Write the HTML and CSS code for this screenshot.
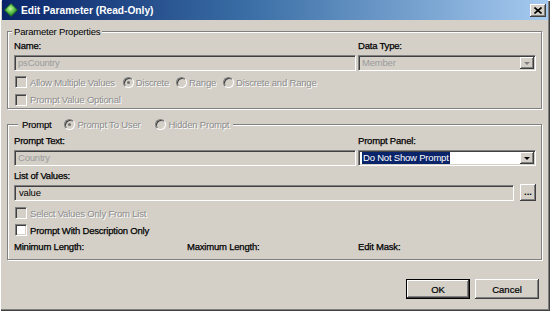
FILE: index.html
```html
<!DOCTYPE html>
<html>
<head>
<meta charset="utf-8">
<link rel="stylesheet" href="styles.css">
</head>
<body>
<div class="window">
  <div class="titlebar">
    <svg class="app-icon" viewBox="0 0 14 14" width="14" height="14">
      <defs>
        <radialGradient id="dg" cx="0.45" cy="0.4" r="0.6">
          <stop offset="0" stop-color="#c8f5a0"/>
          <stop offset="0.5" stop-color="#5cc04a"/>
          <stop offset="1" stop-color="#1d7a22"/>
        </radialGradient>
      </defs>
      <polygon points="7,0.5 13.5,7 7,13.5 0.5,7" fill="url(#dg)" stroke="#17631b" stroke-width="0.8"/>
    </svg>
    <span class="title">Edit Parameter (Read-Only)</span>
    <span class="close">
      <svg viewBox="0 0 8 7" width="8" height="7"><path d="M0.5 0.5 L7.5 6.5 M7.5 0.5 L0.5 6.5" stroke="#000" stroke-width="1.6"/></svg>
    </span>
  </div>

  <div class="client">
    <fieldset class="group g1">
      <legend class="legend1">Parameter Properties</legend>
      <div class="two-col">
        <div class="field">
          <span class="lbl">Name:</span>
          <div class="input disabled">psCountry</div>
        </div>
        <div class="field">
          <span class="lbl">Data Type:</span>
          <div class="select disabled"><span class="sel-text">Member</span><span class="drop"><span class="arrow gray"></span></span></div>
        </div>
      </div>
      <div class="opts row-a">
        <span class="chk dis"><span class="box"></span><span class="txt">Allow Multiple Values</span></span>
        <span class="rad dis"><span class="dot on"></span><span class="txt">Discrete</span></span>
        <span class="rad dis"><span class="dot"></span><span class="txt">Range</span></span>
        <span class="rad dis"><span class="dot"></span><span class="txt">Discrete and Range</span></span>
      </div>
      <div class="opts row-b">
        <span class="chk dis"><span class="box"></span><span class="txt">Prompt Value Optional</span></span>
      </div>
    </fieldset>

    <fieldset class="group g2">
      <legend class="legend2">
        <span class="legend-inner">
          <span class="legend-text">Prompt</span>
          <span class="rad dis r1"><span class="dot on"></span><span class="txt">Prompt To User</span></span>
          <span class="rad dis r2"><span class="dot"></span><span class="txt">Hidden Prompt</span></span>
        </span>
      </legend>
      <div class="two-col first">
        <div class="field">
          <span class="lbl">Prompt Text:</span>
          <div class="input disabled">Country</div>
        </div>
        <div class="field">
          <span class="lbl">Prompt Panel:</span>
          <div class="select white"><span class="sel-text"><span class="hl">Do Not Show Prompt</span></span><span class="drop"><span class="arrow"></span></span></div>
        </div>
      </div>
      <span class="lbl lov">List of Values:</span>
      <div class="lov-row">
        <div class="input ro">value</div>
        <span class="ellipsis">...</span>
      </div>
      <div class="opts row-c">
        <span class="chk dis"><span class="box"></span><span class="txt">Select Values Only From List</span></span>
      </div>
      <div class="opts row-d">
        <span class="chk"><span class="box white"></span><span class="txt">Prompt With Description Only</span></span>
      </div>
      <div class="len-row">
        <span class="lbl">Minimum Length:</span>
        <span class="lbl">Maximum Length:</span>
        <span class="lbl">Edit Mask:</span>
      </div>
    </fieldset>

    <div class="buttons">
      <button class="btn default">OK</button>
      <button class="btn">Cancel</button>
    </div>
  </div>
</div>
</body>
</html>
```

FILE: styles.css
```css
* { box-sizing: border-box; }

html, body {
  margin: 0;
  padding: 0;
  background: #d4d0c8;
}

body {
  font-family: "Liberation Sans", Arial, sans-serif;
  font-size: 9.5px;
  letter-spacing: -0.2px;
  color: #000;
}

.window {
  width: 550px;
  height: 311px;
  display: flex;
  flex-direction: column;
  background: #d4d0c8;
  box-shadow: inset 1px 1px 0 #fff, inset -1px -1px 0 #404040, inset -2px -2px 0 #808080;
}

/* title bar */
.titlebar {
  height: 20px;
  margin: 0 2px;
  padding: 0 2px 0 2px;
  display: flex;
  align-items: center;
  background: linear-gradient(to right, #0a246a 0%, #3a6ea5 45%, #a6caf0 100%);
}

.app-icon {
  flex: none;
  width: 14px;
  height: 14px;
  margin-right: 3px;
}

.title {
  flex: 1;
  color: #fff;
  font-weight: bold;
  font-size: 10.2px;
  letter-spacing: 0;
  padding-top: 1px;
}

.close {
  flex: none;
  width: 16px;
  height: 13px;
  display: flex;
  align-items: center;
  justify-content: center;
  background: #d4d0c8;
  box-shadow: inset -1px -1px 0 #404040, inset 1px 1px 0 #fff, inset -2px -2px 0 #808080;
}

/* client area */
.client {
  flex: 1;
  display: flex;
  flex-direction: column;
  padding: 5px 8px 0 7px;
}

.group {
  margin: 0;
  padding: 0 5px 0 6px;
  border: 1px solid #808080;
  box-shadow: 1px 1px 0 #fff, inset 1px 1px 0 #fff;
  min-width: 0;
}

.group legend {
  height: 13px;
  line-height: 13px;
  background: #d4d0c8;
}

.legend1 {
  padding: 0 2px;
  margin-left: -2px;
}

.g2 {
  margin-top: 9px;
  padding-bottom: 6px;
}

.legend2 {
  padding: 0 4px;
  margin-left: 4px;
}

.legend-inner {
  display: flex;
  align-items: center;
  height: 13px;
}

.legend-inner .r1 { margin-left: 13px; }
.legend-inner .r2 { margin-left: 15px; }

.two-col {
  display: grid;
  grid-template-columns: 1fr 178px;
  column-gap: 2px;
  margin-top: 2px;
}

.two-col.first { margin-top: 4px; }

.field {
  display: flex;
  flex-direction: column;
}

.lbl {
  display: block;
  height: 12px;
  line-height: 12px;
  margin-bottom: 3px;
  white-space: nowrap;
  -webkit-text-stroke: 0.25px #000;
}

/* sunken edit fields */
.input, .select {
  height: 16px;
  border: 1px solid;
  border-color: #808080 #fff #fff #808080;
  box-shadow: inset 1px 1px 0 #404040, inset -1px -1px 0 #d4d0c8;
  background: #d4d0c8;
  line-height: 14px;
  white-space: nowrap;
  overflow: hidden;
}

.input {
  padding: 0 3px;
}

.input.disabled, .select.disabled .sel-text {
  color: #9a9a9a;
}

.select {
  display: flex;
  padding: 1px;
}

.select.white {
  background: #fff;
}

.sel-text {
  flex: 1;
  padding-left: 2px;
  line-height: 12px;
}

.hl {
  display: inline-block;
  background: #0a246a;
  color: #fff;
  line-height: 12px;
  padding: 0 1px;
}

.drop {
  flex: none;
  width: 14px;
  height: 12px;
  display: flex;
  align-items: center;
  justify-content: center;
  background: #d4d0c8;
  box-shadow: inset -1px -1px 0 #404040, inset 1px 1px 0 #fff, inset -2px -2px 0 #808080;
}

.arrow {
  width: 0;
  height: 0;
  border-left: 3px solid transparent;
  border-right: 3px solid transparent;
  border-top: 3px solid #000;
  margin-top: 1px;
}

.arrow.gray {
  border-top-color: #808080;
}

/* check / radio rows */
.opts {
  display: flex;
  align-items: center;
  height: 16px;
  padding-left: 1px;
}

.row-a { margin-top: 3px; gap: 7px; }
.row-b { margin-top: 1px; height: 17px; }
.row-c { margin-top: 4px; }
.row-d { margin-top: 1px; }

.chk, .rad {
  display: inline-flex;
  align-items: center;
  white-space: nowrap;
}

.row-a .chk { margin-right: 1px; }

.chk .box {
  flex: none;
  width: 12px;
  height: 12px;
  margin-right: 3px;
  border: 1px solid;
  border-color: #808080 #fff #fff #808080;
  box-shadow: inset 1px 1px 0 #404040, inset -1px -1px 0 #d4d0c8;
  background: #d4d0c8;
}

.chk .box.white {
  background: #fff;
}

.rad .dot {
  flex: none;
  position: relative;
  width: 11px;
  height: 11px;
  margin-right: 2px;
  border-radius: 50%;
  border: 1px solid;
  border-color: #808080 #fff #fff #808080;
  box-shadow: inset 1px 1px 0 #404040;
  background: #d4d0c8;
}

.rad .dot.on::after {
  content: "";
  position: absolute;
  left: 3px;
  top: 3px;
  width: 3px;
  height: 3px;
  border-radius: 50%;
  background: #707070;
}

.dis .txt {
  color: #8c8c8c;
  text-shadow: 1px 1px 0 #fff;
}

.chk:not(.dis) .txt {
  -webkit-text-stroke: 0.25px #000;
}

.legend-text {
  -webkit-text-stroke: 0.15px #000;
}

/* list of values */
.lov {
  margin-top: 4px;
  margin-bottom: 2px;
}

.lov-row {
  display: grid;
  grid-template-columns: 1fr 16px;
  column-gap: 6px;
  align-items: end;
}

.lov-row .input {
  padding-left: 4px;
}

.ellipsis {
  height: 17px;
  display: flex;
  align-items: center;
  justify-content: center;
  font-weight: bold;
  letter-spacing: 0;
  padding-bottom: 2px;
  background: #d4d0c8;
  box-shadow: inset -1px -1px 0 #404040, inset 1px 1px 0 #fff, inset -2px -2px 0 #808080;
}

.len-row {
  display: grid;
  grid-template-columns: 173px 1fr 178px;
  margin-top: 3px;
}

.len-row .lbl {
  margin-bottom: 0;
}

/* buttons */
.buttons {
  display: flex;
  justify-content: flex-end;
  gap: 5px;
  margin-top: 19px;
  padding-right: 3px;
}

.btn {
  width: 64px;
  height: 20px;
  padding: 0;
  border: 0;
  font: inherit;
  letter-spacing: 0;
  color: #000;
  background: #d4d0c8;
  box-shadow: inset -1px -1px 0 #404040, inset 1px 1px 0 #fff, inset -2px -2px 0 #808080;
  -webkit-text-stroke: 0.2px #000;
}

.btn.default {
  box-shadow: inset 0 0 0 1px #000, inset -2px -2px 0 #404040, inset 2px 2px 0 #fff, inset -3px -3px 0 #808080;
}
```
